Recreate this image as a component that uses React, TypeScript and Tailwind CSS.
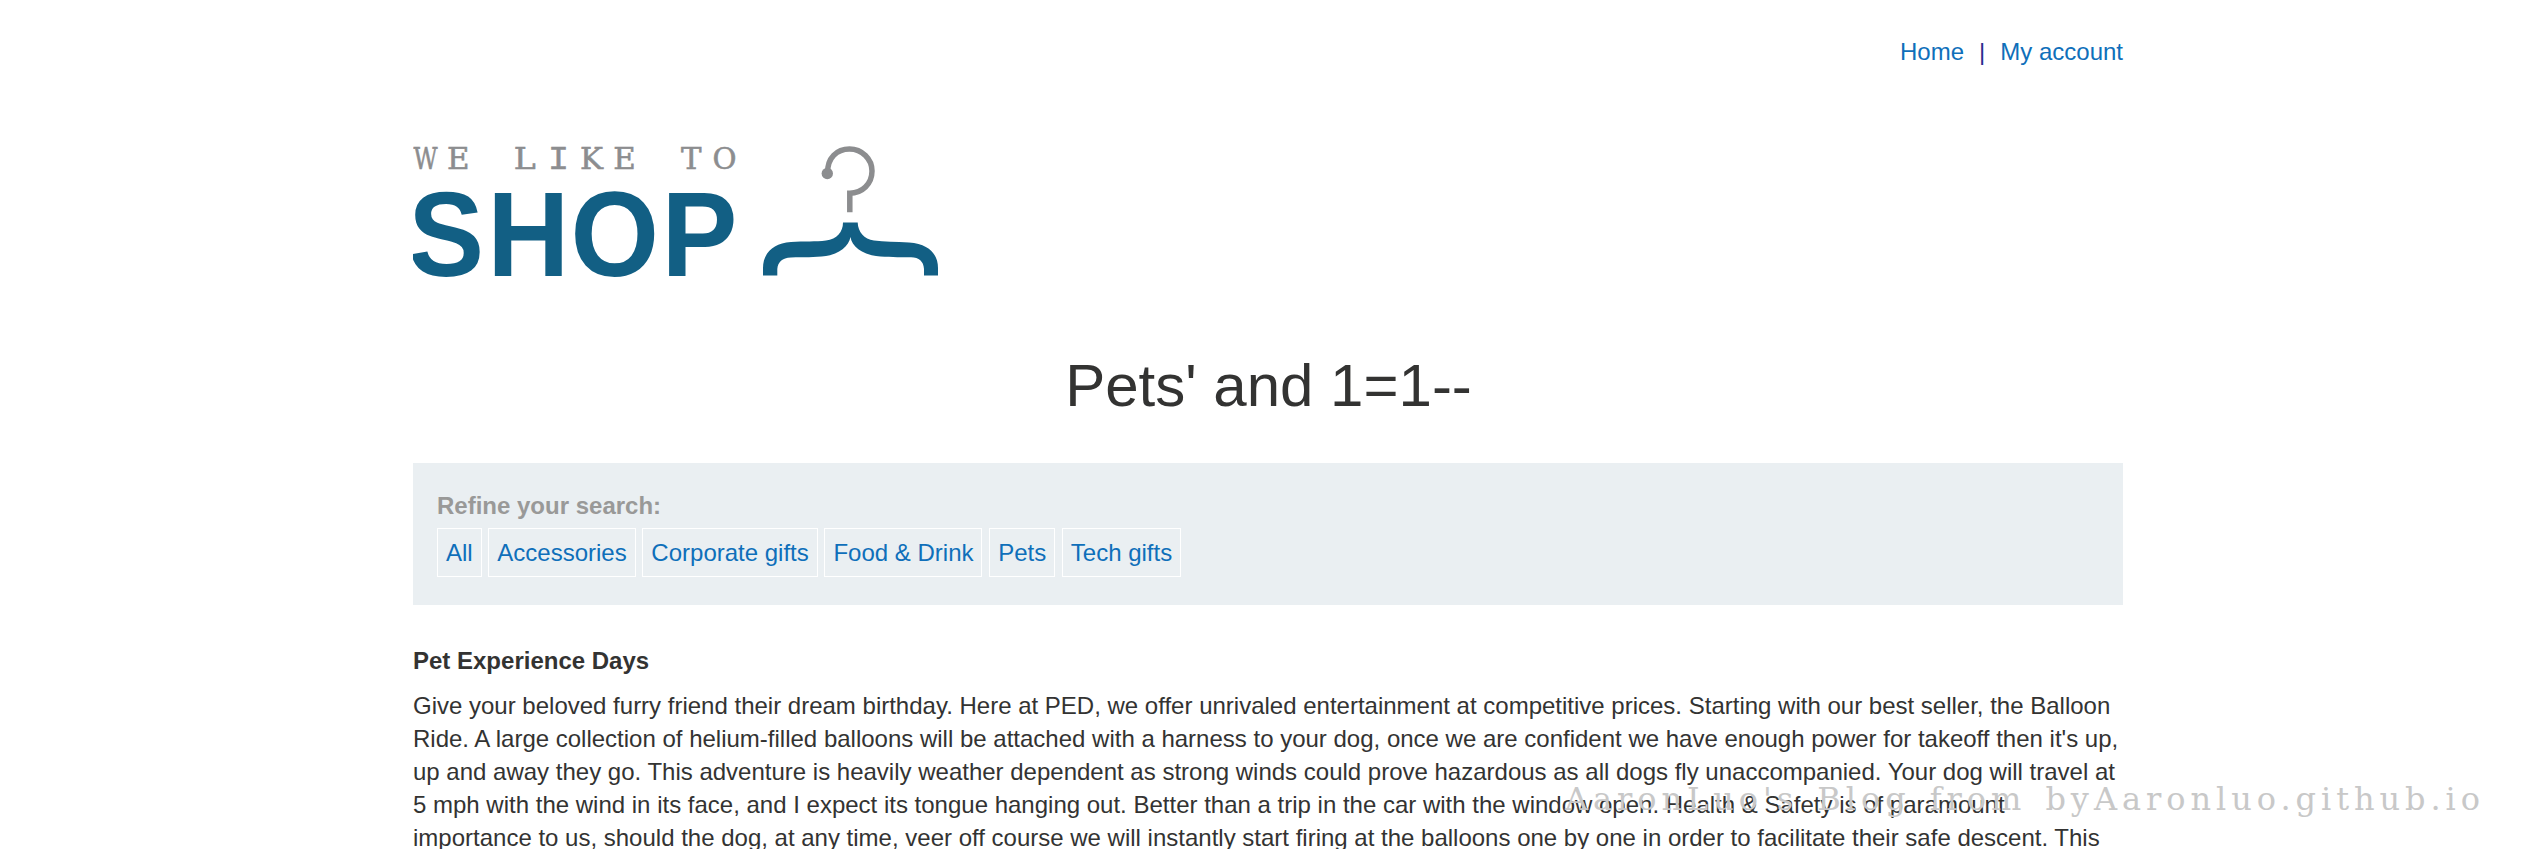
import React from "react";

const filters = ["All", "Accessories", "Corporate gifts", "Food & Drink", "Pets", "Tech gifts"];

const lines = [
  "Give your beloved furry friend their dream birthday. Here at PED, we offer unrivaled entertainment at competitive prices. Starting with our best seller, the Balloon",
  "Ride. A large collection of helium-filled balloons will be attached with a harness to your dog, once we are confident we have enough power for takeoff then it's up,",
  "up and away they go. This adventure is heavily weather dependent as strong winds could prove hazardous as all dogs fly unaccompanied. Your dog will travel at",
  "5 mph with the wind in its face, and I expect its tongue hanging out. Better than a trip in the car with the window open. Health & Safety is of paramount",
  "importance to us, should the dog, at any time, veer off course we will instantly start firing at the balloons one by one in order to facilitate their safe descent. This",
];

const tagline: [string, number, number][] = [
  ["W", 413.5, 24], ["E", 447, 22.5], ["L", 513.7, 22], ["I", 548, 21],
  ["K", 580, 23], ["E", 613.3, 22.5], ["T", 681, 20.5], ["O", 712.5, 24],
];

function Logo() {
  return (
    <svg width="540" height="160" viewBox="413 134 540 160" className="block" role="img">
      <g fill="#8c8d8f" stroke="#8c8d8f" strokeWidth="0.6">
        {tagline.map(([ch, x, w]) => (
          <text
            key={x}
            x={x}
            y="169"
            textLength={w}
            lengthAdjust="spacingAndGlyphs"
            fontSize={ch === "I" ? 34 : 30.5}
            fontFamily={ch === "I" ? "'Liberation Mono', monospace" : "'DejaVu Serif', serif"}
          >
            {ch}
          </text>
        ))}
      </g>
      <g transform="translate(412 0) scale(0.94 1)">
        <text x="-4 80 168.500 265.500" y="276" fontSize="121" fontWeight="700" fill="#125f84" fontFamily="'Liberation Sans', sans-serif">SHOP</text>
      </g>
      <path d="M827.700 173C827 158 837 149 849.500 149C862 149 872 159 872 171C872 184 862 193.200 849.800 193.200V212.300" fill="none" stroke="#8c8d8f" strokeWidth="5.500" />
      <circle cx="827.300" cy="173.500" r="5.700" fill="#8c8d8f" />
      <path d="M843 222.500H857.700C858 232 864 239 874 240.500C884 242 896 241.500 909 242.500C930 244 938 255 938 268V275.500H924V269C923.500 261 919 257.500 911 257.200C898 257 888 257.500 876 256C862 254 851.500 246 850.500 237C849 246 839 254 826 256C814 257.500 804 257 791 257.500C782 258 778 262 777.300 269V275.500H763V268C763 254 772 243.500 791 242C804 241 816 242 826 240.500C837 239 843 232 843 222.500Z" fill="#125f84" />
    </svg>
  );
}

export default function App() {
  return (
    <div className="relative h-[849px] overflow-hidden bg-white font-['Liberation_Sans',sans-serif] text-2xl leading-[33px] text-[#333332]">
      <div className="ml-[413px] w-[1710px]">
        <nav className="flex h-[134px] justify-end gap-[15px] pt-[35px] text-[#0f6fba]">
          <a>Home</a>
          <span className="text-[#29298e]">|</span>
          <a>My account</a>
        </nav>
        <div className="h-[206px]"><Logo /></div>
        <h1 className="h-[123px] pt-3 pl-px text-center text-[60px] leading-[68px]">Pets' and 1=1--</h1>
        <section className="h-[142px] bg-[#eaeff2] px-6 pt-[26px]">
          <p className="font-bold text-[#999998]">Refine your search:</p>
          <div className="mt-[6px] flex gap-[6.670px] text-[#0f6fba]">
            {filters.map((f) => (
              <a key={f} className="h-[49px] border border-white px-2 pt-[7px]">{f}</a>
            ))}
          </div>
        </section>
        <h3 className="mt-[39px] font-bold">Pet Experience Days</h3>
        <p className="mt-3 h-[137px] whitespace-nowrap">
          {lines.map((l) => (
            <span key={l} className="block">{l}</span>
          ))}
        </p>
      </div>
      <div className="absolute left-[1565px] top-[780px] whitespace-nowrap font-['DejaVu_Serif',serif] text-[32px] leading-[38px] tracking-[4.950px] text-[#c8c8c8] [word-spacing:4px]">
        AaronLuo's Blog from byAaronluo.github.io
      </div>
    </div>
  );
}
